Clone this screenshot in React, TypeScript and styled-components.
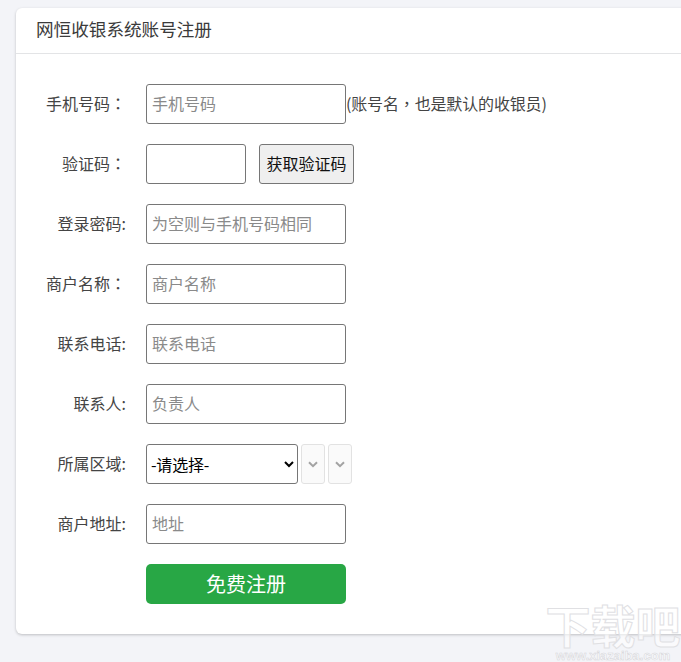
import React from "react";
import styled, { createGlobalStyle } from "styled-components";

const Global = createGlobalStyle`
  html, body { margin: 0; padding: 0; height: 100%; overflow: hidden; background: #f3f4f8; }
  body { font-family: "Noto Sans CJK SC", "Liberation Sans", sans-serif; color: #212529; }
`;

const Page = styled.div`
  position: relative;
  width: 681px;
  height: 662px;
  padding: 8px 0 0 16px;
  box-sizing: border-box;
  overflow: hidden;
`;

const Card = styled.div`
  width: 690px;
  height: 626px;
  box-sizing: border-box;
  background: #fff;
  border-radius: 6px;
  box-shadow: 0 1px 3px rgba(0, 0, 0, 0.22);
`;

const CardHeader = styled.div`
  height: 46px;
  box-sizing: border-box;
  padding: 8px 0 0 20px;
  border-bottom: 1px solid #e3e4e6;
  font-size: 17.6px;
  line-height: 26px;
  color: #3a3a3a;
`;

const Form = styled.form`
  display: flex;
  flex-direction: column;
  gap: 20px;
  padding: 30px 0 0 0;
`;

const Row = styled.div`
  display: flex;
  align-items: center;
  height: 40px;
`;

const Label = styled.label`
  width: 110px;
  margin-right: 20px;
  flex: none;
  padding-bottom: 2px;
  text-align: right;
  font-size: 16px;
  color: #444;
  white-space: nowrap;
`;

const CenteredColon = styled.span`
  font-family: "Noto Sans CJK TC", sans-serif;
`;

const Input = styled.input<{ $w?: number }>`
  width: ${(p) => p.$w ?? 200}px;
  height: 40px;
  box-sizing: border-box;
  padding: 0 5px 2px;
  border: 1px solid #767676;
  border-radius: 3px;
  background: #fff;
  outline: none;
  font-family: inherit;
  font-size: 16px;
  color: #333;
  &::placeholder { color: #8a8a8a; opacity: 1; }
`;

const Hint = styled.span`
  padding-bottom: 2px;
  font-size: 16px;
  letter-spacing: -0.15px;
  color: #444;
  white-space: nowrap;
`;

const Comma = styled.span`
  font-family: "Noto Sans CJK TC", sans-serif;
`;

const CodeButton = styled.button`
  width: 95px;
  height: 40px;
  margin-left: 13px;
  padding: 0 0 2px;
  box-sizing: border-box;
  border: 1px solid #767676;
  border-radius: 3px;
  background: #efefef;
  font-family: inherit;
  font-size: 16px;
  color: #111;
`;

const Select = styled.select`
  width: 152px;
  height: 40px;
  box-sizing: border-box;
  border: 1px solid #767676;
  border-radius: 3px;
  background: #fff;
  font-family: inherit;
  font-size: 16px;
  letter-spacing: -0.2px;
  color: #000;
  outline: none;
`;

const MiniSelect = styled.span`
  display: flex;
  align-items: center;
  justify-content: center;
  width: 24px;
  height: 40px;
  margin-left: 3px;
  box-sizing: border-box;
  border: 1px solid #e2e2e2;
  border-radius: 3px;
  background: #fafafa;
`;

const Submit = styled.button`
  width: 200px;
  height: 40px;
  margin-left: 130px;
  padding: 0 0 2px;
  border: none;
  border-radius: 5px;
  background: #28a745;
  color: #fff;
  font-family: inherit;
  font-size: 20px;
`;

const Watermark = styled.div`
  position: absolute;
  right: 0;
  bottom: 0;
  width: 136px;
  display: flex;
  flex-direction: column;
  gap: 4px;
  text-align: center;
  pointer-events: none;
`;

const WatermarkTitle = styled.div`
  font-size: 45px;
  line-height: 40px;
  font-weight: 700;
  white-space: nowrap;
  color: rgba(255, 255, 255, 0.6);
  -webkit-text-stroke: 1px #e0e0e3;
`;

const WatermarkUrl = styled.div`
  font-family: "Liberation Sans", sans-serif;
  font-size: 13px;
  line-height: 13px;
  font-weight: 700;
  white-space: nowrap;
  color: rgba(255, 255, 255, 0.6);
  -webkit-text-stroke: 0.5px #d4d4d8;
`;

const Chevron = () => (
  <svg width="10" height="7" viewBox="0 0 10 7" fill="none">
    <path d="M1 1.2 L5 5.2 L9 1.2" stroke="#a3a3a3" strokeWidth="2" />
  </svg>
);

const fields: [React.ReactNode, string, string][] = [
  ["登录密码:", "为空则与手机号码相同", "pwd"],
  [<>商户名称<CenteredColon>：</CenteredColon></>, "商户名称", "name"],
  ["联系电话:", "联系电话", "tel"],
  ["联系人:", "负责人", "contact"],
];

export default function App() {
  return (
    <Page>
      <Global />
      <Card>
        <CardHeader>网恒收银系统账号注册</CardHeader>
        <Form onSubmit={(e) => e.preventDefault()}>
          <Row>
            <Label>手机号码<CenteredColon>：</CenteredColon></Label>
            <Input placeholder="手机号码" />
            <Hint>(账号名<Comma>，</Comma>也是默认的收银员)</Hint>
          </Row>
          <Row>
            <Label>验证码<CenteredColon>：</CenteredColon></Label>
            <Input $w={100} />
            <CodeButton type="button">获取验证码</CodeButton>
          </Row>
          {fields.map(([label, ph, key]) => (
            <Row key={key}>
              <Label>{label}</Label>
              <Input placeholder={ph} />
            </Row>
          ))}
          <Row>
            <Label>所属区域:</Label>
            <Select defaultValue="">
              <option value="">-请选择-</option>
            </Select>
            <MiniSelect><Chevron /></MiniSelect>
            <MiniSelect><Chevron /></MiniSelect>
          </Row>
          <Row>
            <Label>商户地址:</Label>
            <Input placeholder="地址" />
          </Row>
          <Row>
            <Submit type="button">免费注册</Submit>
          </Row>
        </Form>
      </Card>
      <Watermark>
        <WatermarkTitle>下载吧</WatermarkTitle>
        <WatermarkUrl>www.xiazaiba.com</WatermarkUrl>
      </Watermark>
    </Page>
  );
}
